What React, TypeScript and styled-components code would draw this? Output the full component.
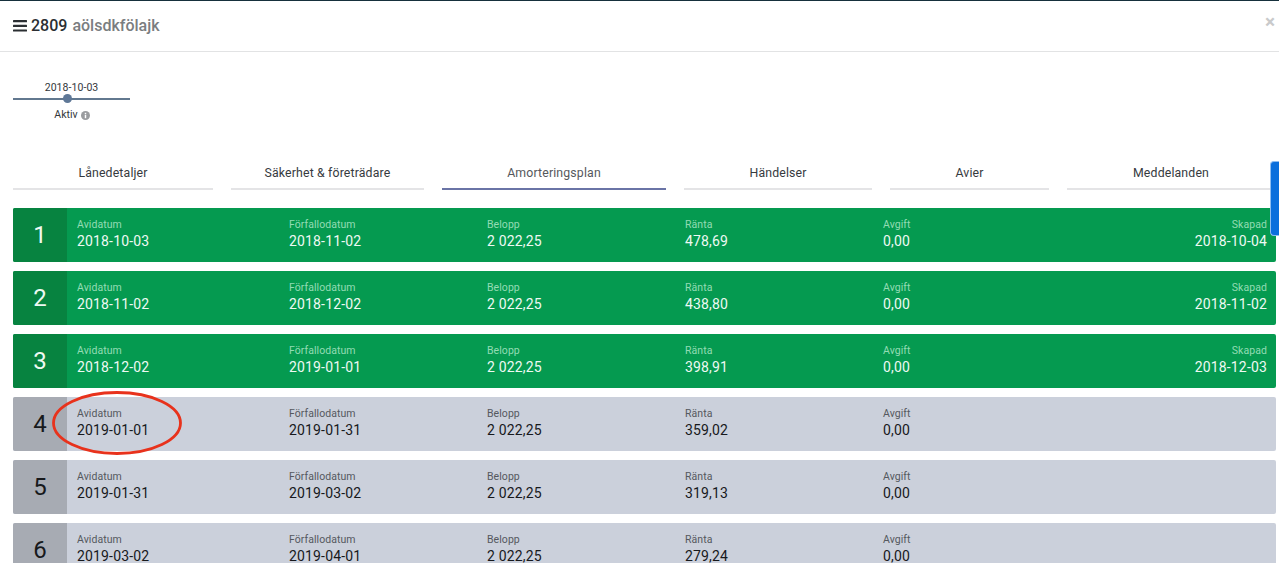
import React from "react";
import styled, { createGlobalStyle } from "styled-components";

const Global = createGlobalStyle`
  html, body { margin: 0; padding: 0; background: #fff; height: 563px; overflow: hidden; }
  body { font-family: Roboto, "Liberation Sans", sans-serif; color: #212529; }
  * { box-sizing: border-box; }
`;
const Page = styled.div`
  position: relative;
  width: 1279px;
  height: 563px;
  overflow: hidden;
  border-top: 1px solid #16303c;
`;
const Header = styled.header`
  display: flex;
  align-items: center;
  justify-content: space-between;
  height: 51px;
  padding: 0 4px 0 13px;
  border-bottom: 1px solid #e2e3e4;
`;
const Title = styled.h1`
  display: flex;
  align-items: center;
  gap: 4px;
  margin: 0;
  font-size: 16px;
  line-height: 20px;
  font-weight: 500;
  color: #2b2f33;
`;
const Sub = styled.span`
  color: #7a7d80;
  margin-left: 1px;
`;
const Close = styled.span`
  font-size: 19px;
  font-weight: 700;
  line-height: 1;
  color: #c9cacb;
  margin-top: -9px;
`;
const TimelineBlock = styled.div`
  display: flex;
  flex-direction: column;
  align-items: center;
  width: 117px;
  margin: 29px 0 0 13px;
  font-size: 10.5px;
  line-height: 14px;
  letter-spacing: 0.06px;
  color: #33373b;
`;
const Track = styled.div`
  position: relative;
  width: 100%;
  height: 2px;
  margin: 3px 0 8px;
  background: #62788f;
`;
const Thumb = styled.span`
  position: absolute;
  left: 50px;
  top: -4px;
  width: 9px;
  height: 9px;
  border-radius: 50%;
  background: #5f7897;
`;
const Status = styled.div`
  display: flex;
  align-items: center;
  gap: 3px;
  margin-left: 1px;
`;
const Tabs = styled.nav`
  display: grid;
  grid-template-columns: 200px 193px 224px 188px 159px 208px;
  column-gap: 18px;
  margin: 37px 0 0 13px;
`;
const Tab = styled.div<{ $active?: boolean }>`
  height: 31px;
  padding-top: 6px;
  text-align: center;
  font-size: 12.3px;
  line-height: 16px;
  letter-spacing: 0.15px;
  color: ${(p) => (p.$active ? "#55585c" : "#363a3e")};
  border-bottom: 2px solid ${(p) => (p.$active ? "#6a74a6" : "#e4e4e6")};
`;
const List = styled.div`
  display: flex;
  flex-direction: column;
  gap: 9px;
  margin: 18px 3px 0 13px;
`;
const Row = styled.div<{ $paid: boolean }>`
  display: flex;
  flex: none;
  height: 54px;
  border-radius: 2px;
  overflow: hidden;
  background: ${(p) => (p.$paid ? "#059a50" : "#cbd0db")};
  color: ${(p) => (p.$paid ? "#eef9f3" : "#17191c")};
`;
const Num = styled.div<{ $paid: boolean }>`
  display: flex;
  flex: none;
  align-items: center;
  justify-content: center;
  width: 54px;
  font-size: 24px;
  background: ${(p) => (p.$paid ? "#078340" : "#a7abb3")};
`;
const Cells = styled.div`
  flex: 1;
  display: grid;
  grid-template-columns: 212px 198px 198px 198px 1fr;
  padding: 10px 9px 0 10px;
`;
const LastCell = styled.div`
  display: flex;
  justify-content: space-between;
`;
const Cell = styled.div<{ $right?: boolean }>`
  display: flex;
  flex-direction: column;
  align-items: ${(p) => (p.$right ? "flex-end" : "flex-start")};
`;
const Label = styled.span<{ $paid: boolean }>`
  font-size: 10.5px;
  line-height: 13px;
  letter-spacing: 0.06px;
  color: ${(p) => (p.$paid ? "#93dcb4" : "#55585e")};
`;
const Value = styled.span`
  margin-top: 2px;
  font-size: 14px;
  line-height: 17px;
  letter-spacing: 0.16px;
`;
const SideTab = styled.div`
  position: absolute;
  right: 0;
  top: 160px;
  width: 9px;
  height: 75px;
  background: #0b6fdc;
  border: 1px solid #8fbdf0;
  border-right: 0;
  border-radius: 4px 0 0 4px;
`;
const Ring = styled.svg`
  position: absolute;
  left: 48px;
  top: 388px;
`;

const rows = [
  ["2018-10-03", "2018-11-02", "478,69", "2018-10-04"],
  ["2018-11-02", "2018-12-02", "438,80", "2018-11-02"],
  ["2018-12-02", "2019-01-01", "398,91", "2018-12-03"],
  ["2019-01-01", "2019-01-31", "359,02"],
  ["2019-01-31", "2019-03-02", "319,13"],
  ["2019-03-02", "2019-04-01", "279,24"],
];
const tabs = ["Lånedetaljer", "Säkerhet & företrädare", "Amorteringsplan", "Händelser", "Avier", "Meddelanden"];

export default function App() {
  return (
    <Page>
      <Global />
      <Header>
        <Title>
          <svg width="14" height="12" viewBox="0 0 14 12" fill="#2b2f33">
            <rect y="0" width="14" height="2.2" rx="0.5" />
            <rect y="4.7" width="14" height="2.2" rx="0.5" />
            <rect y="9.4" width="14" height="2.2" rx="0.5" />
          </svg>
          <span>2809</span>
          <Sub>aölsdkfölajk</Sub>
        </Title>
        <Close>×</Close>
      </Header>
      <TimelineBlock>
        <span>2018-10-03</span>
        <Track>
          <Thumb />
        </Track>
        <Status>
          Aktiv
          <svg width="9" height="9" viewBox="0 0 10 10">
            <circle cx="5" cy="5" r="5" fill="#9a9c9f" />
            <rect x="4.2" y="4.2" width="1.6" height="3.8" fill="#fff" />
            <rect x="4.2" y="2" width="1.6" height="1.5" fill="#fff" />
          </svg>
        </Status>
      </TimelineBlock>
      <Tabs>
        {tabs.map((t) => (
          <Tab key={t} $active={t === "Amorteringsplan"}>{t}</Tab>
        ))}
      </Tabs>
      <List>
        {rows.map((r, i) => {
          const paid = r.length === 4;
          return (
            <Row key={r[0]} $paid={paid}>
              <Num $paid={paid}>{i + 1}</Num>
              <Cells>
                <Cell><Label $paid={paid}>Avidatum</Label><Value>{r[0]}</Value></Cell>
                <Cell><Label $paid={paid}>Förfallodatum</Label><Value>{r[1]}</Value></Cell>
                <Cell><Label $paid={paid}>Belopp</Label><Value>2 022,25</Value></Cell>
                <Cell><Label $paid={paid}>Ränta</Label><Value>{r[2]}</Value></Cell>
                <LastCell>
                  <Cell><Label $paid={paid}>Avgift</Label><Value>0,00</Value></Cell>
                  {paid && <Cell $right><Label $paid={paid}>Skapad</Label><Value>{r[3]}</Value></Cell>}
                </LastCell>
              </Cells>
            </Row>
          );
        })}
      </List>
      <SideTab />
      <Ring width="140" height="70" viewBox="0 0 140 70">
        <ellipse cx="69" cy="34" rx="63.5" ry="30.5" fill="none" stroke="#e8321c" strokeWidth="2.8" />
      </Ring>
    </Page>
  );
}
